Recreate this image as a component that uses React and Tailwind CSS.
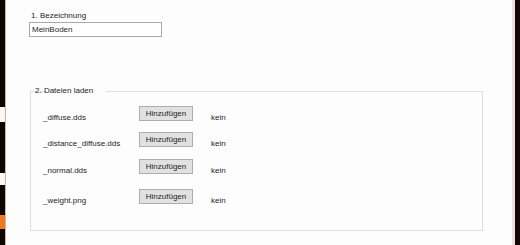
import React from "react";

const rows = [
  { name: "_diffuse.dds", mt: "mt-[10px]" },
  { name: "_distance_diffuse.dds", mt: "mt-[9px]" },
  { name: "_normal.dds", mt: "mt-[10px]" },
  { name: "_weight.png", mt: "mt-[13px]" },
];

export default function App() {
  return (
    <div
      className="flex w-[520px] h-[245px] overflow-hidden bg-[#fdfdfd] text-[#1e1e1e] text-[8px] leading-[10px]"
      style={{ fontFamily: '"Liberation Sans", Arial, sans-serif' }}
    >
      {/* left edge strip */}
      <div className="flex flex-col w-[5px] shrink-0 bg-[#0a0606]">
        <div className="h-[107px] bg-[#0a0606]" />
        <div className="h-[15px] bg-[#fbf7f7]" />
        <div className="h-[51px] bg-[#0a0606] rounded-tl-[3px] rounded-bl-[3px]" />
        <div className="h-[12px] bg-[#fbf7f7]" />
        <div className="h-[30px] bg-[#0a0606]" />
        <div className="h-[14px] bg-[#f07a1e]" />
        <div className="flex-1 bg-[#0a0606]" />
      </div>
      <div className="w-px shrink-0 bg-[#e4a8a8]" />

      {/* main content */}
      <div className="flex-1 flex flex-col pl-[23px] pt-[11px]">
        <div className="ml-[2px]">1. Bezeichnung</div>
        <div className="mt-[1px] w-[133px] h-[15px] border border-[#a9a9a9] bg-white flex items-center pl-[2px]">
          MeinBoden
        </div>

        <fieldset className="mt-[49px] ml-[1px] w-[453px] border border-[#dedede] pb-[24px] pl-[12px]">
          <legend className="ml-[3px] px-[1px] -translate-x-[12px]">2. Dateien laden</legend>
          {rows.map((r) => (
            <div key={r.name} className={`flex items-start ${r.mt}`}>
              <div className="w-[96px] mt-[7px]">{r.name}</div>
              <div className="w-[54px] h-[15px] bg-[#e1e1e1] border border-[#adadad] flex items-center justify-center">
                Hinzufügen
              </div>
              <div className="ml-[18px] mt-[7px]">kein</div>
            </div>
          ))}
        </fieldset>
      </div>

      {/* right edge */}
      <div className="w-[3px] shrink-0 bg-[#f2dede]" />
      <div className="w-[5px] shrink-0 bg-[#140707]" />
    </div>
  );
}
